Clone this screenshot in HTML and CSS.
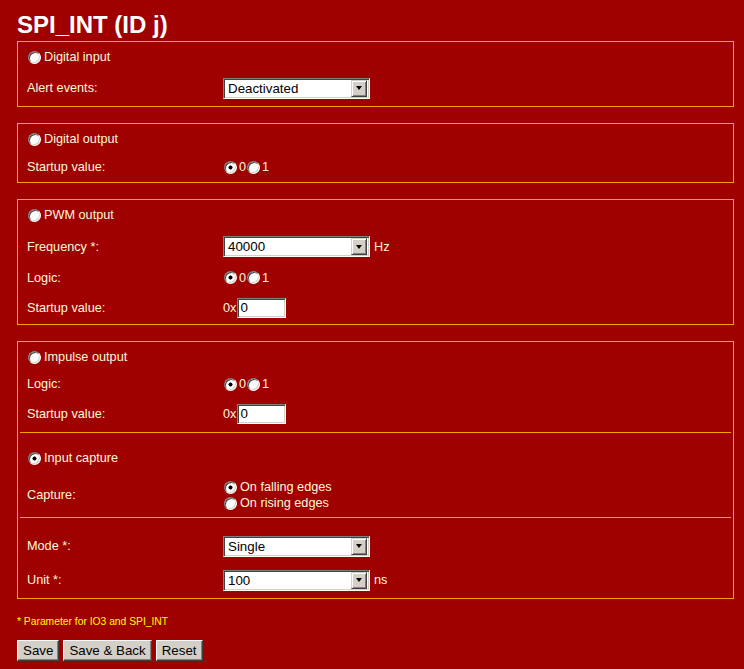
FILE: index.html
```html
<!DOCTYPE html>
<html>
<head>
<meta charset="utf-8">
<title>SPI_INT (ID j)</title>
<link rel="stylesheet" href="styles.css">
</head>
<body>
<div class="page">
  <h1 class="title">SPI_INT (ID j)</h1>

  <div class="box">
    <div class="row head"><span class="radio"></span><span>Digital input</span></div>
    <div class="row r32"><span class="label">Alert events:</span>
      <div class="select"><span class="val">Deactivated</span><span class="btn"><i class="tri"></i></span></div>
    </div>
  </div>

  <div class="box">
    <div class="row head"><span class="radio"></span><span>Digital output</span></div>
    <div class="row r26"><span class="label">Startup value:</span>
      <div class="opts"><span class="radio on"></span><span class="opt">0</span><span class="radio"></span><span class="opt">1</span></div>
    </div>
  </div>

  <div class="box pb1">
    <div class="row head"><span class="radio"></span><span>PWM output</span></div>
    <div class="row r33"><span class="label">Frequency *:</span>
      <div class="select"><span class="val">40000</span><span class="btn"><i class="tri"></i></span></div><span class="unit">Hz</span>
    </div>
    <div class="row r29"><span class="label">Logic:</span>
      <div class="opts"><span class="radio on"></span><span class="opt">0</span><span class="radio"></span><span class="opt">1</span></div>
    </div>
    <div class="row r31"><span class="label">Startup value:</span>
      <span class="hex">0x</span><div class="inp">0</div>
    </div>
  </div>

  <div class="box last">
    <div class="row head"><span class="radio"></span><span>Impulse output</span></div>
    <div class="row r24"><span class="label">Logic:</span>
      <div class="opts"><span class="radio on"></span><span class="opt">0</span><span class="radio"></span><span class="opt">1</span></div>
    </div>
    <div class="row r36"><span class="label">Startup value:</span>
      <span class="hex">0x</span><div class="inp">0</div>
    </div>
    <div class="sep"></div>
    <div class="row head mt10"><span class="radio on"></span><span>Input capture</span></div>
    <div class="row r44"><span class="label">Capture:</span>
      <div class="stack">
        <div class="line"><span class="radio on"></span><span class="opt">On falling edges</span></div>
        <div class="line"><span class="radio"></span><span class="opt">On rising edges</span></div>
      </div>
    </div>
    <div class="sep"></div>
    <div class="row r36 mt10"><span class="label">Mode *:</span>
      <div class="select"><span class="val">Single</span><span class="btn"><i class="tri"></i></span></div>
    </div>
    <div class="row r32"><span class="label">Unit *:</span>
      <div class="select"><span class="val">100</span><span class="btn"><i class="tri"></i></span></div><span class="unit">ns</span>
    </div>
  </div>

  <p class="note">* Parameter for IO3 and SPI_INT</p>

  <div class="buttons">
    <span class="button">Save</span>
    <span class="button">Save &amp; Back</span>
    <span class="button">Reset</span>
  </div>
</div>
</body>
</html>
```

FILE: styles.css
```css
html, body {
  margin: 0;
  padding: 0;
  background: #9f0000;
}
body {
  font-family: "Liberation Sans", Arial, sans-serif;
  font-size: 12.7px;
  color: #fff8dc;
}
.page {
  padding: 11px 0 0 17px;
  width: 717px;
}
.title {
  margin: 0 0 3px 0;
  font-size: 24px;
  line-height: 27px;
  font-weight: bold;
  color: #ffffff;
}
.box {
  box-sizing: border-box;
  border: 1px solid #ffa500;
  padding-bottom: 2px;
  margin-bottom: 16px;
}
.box.pb1 { padding-bottom: 1px; }
.box.last { padding-bottom: 2px; margin-bottom: 0; }
.row {
  display: flex;
  align-items: center;
  padding-left: 9px;
}
.head { height: 30px; }
.head .radio { margin-left: 1px; margin-right: 3px; }
.r24 { height: 24px; }
.r26 { height: 26px; }
.r29 { height: 29px; }
.r31 { height: 31px; }
.r32 { height: 32px; }
.r33 { height: 33px; }
.r36 { height: 36px; }
.r44 { height: 44px; }
.mt10 { margin-top: 10px; }
.label {
  width: 196px;
  flex: none;
}
.sep {
  border-top: 1px solid #ffa500;
  margin: 0 2px;
}
.radio {
  flex: none;
  width: 13px;
  height: 13px;
  box-sizing: border-box;
  border-radius: 50%;
  border: 1px solid;
  border-color: #808080 #ffffff #ffffff #808080;
  box-shadow: inset 1px 1px 0 #404040, inset -1px -1px 0 #d4d0c8;
  background: #ffffff;
}
.radio.on {
  background: radial-gradient(circle, #000 0 1.8px, #fff 2.3px);
}
.opts {
  display: flex;
  align-items: center;
}
.opts .radio { margin-left: 1px; margin-right: 2px; }
.opt { line-height: 16px; }
.stack {
  display: flex;
  flex-direction: column;
}
.line {
  display: flex;
  align-items: center;
  height: 16px;
}
.line .radio { margin-left: 1px; margin-right: 3px; }
.select {
  flex: none;
  display: flex;
  align-items: center;
  width: 147px;
  height: 21px;
  box-sizing: border-box;
  border: 1px solid;
  border-color: #808080 #ffffff #ffffff #808080;
  box-shadow: inset 1px 1px 0 #404040, inset -1px -1px 0 #d4d0c8;
  background: #ffffff;
  padding: 2px;
  color: #000;
  font-size: 13.33px;
}
.select .val {
  flex: 1;
  padding-left: 2px;
}
.select .btn {
  flex: none;
  width: 16px;
  height: 17px;
  box-sizing: border-box;
  background: #d4d0c8;
  border: 1px solid;
  border-color: #d4d0c8 #404040 #404040 #d4d0c8;
  box-shadow: inset 1px 1px 0 #ffffff, inset -1px -1px 0 #808080;
  display: flex;
  align-items: center;
  justify-content: center;
}
.tri {
  width: 0;
  height: 0;
  border-left: 3.5px solid transparent;
  border-right: 3.5px solid transparent;
  border-top: 4px solid #000;
}
.unit { margin-left: 4px; }
.hex { margin-right: 1px; }
.inp {
  width: 49px;
  height: 20px;
  box-sizing: border-box;
  border: 1px solid;
  border-color: #808080 #ffffff #ffffff #808080;
  box-shadow: inset 1px 1px 0 #404040, inset -1px -1px 0 #d4d0c8;
  background: #ffffff;
  color: #000;
  font-size: 13.33px;
  line-height: 18px;
  padding-left: 2px;
}
.note {
  margin: 16px 0 0 0;
  font-size: 10.3px;
  line-height: 13px;
  color: #ffff00;
}
.buttons {
  display: flex;
  gap: 4px;
  margin-top: 12px;
}
.button {
  display: flex;
  align-items: center;
  height: 21px;
  box-sizing: border-box;
  padding: 0 5px;
  background: #d4d0c8;
  color: #000;
  font-size: 13.33px;
  border: 1px solid;
  border-color: #ffffff #404040 #404040 #ffffff;
  box-shadow: inset -1px -1px 0 #808080;
}
```
